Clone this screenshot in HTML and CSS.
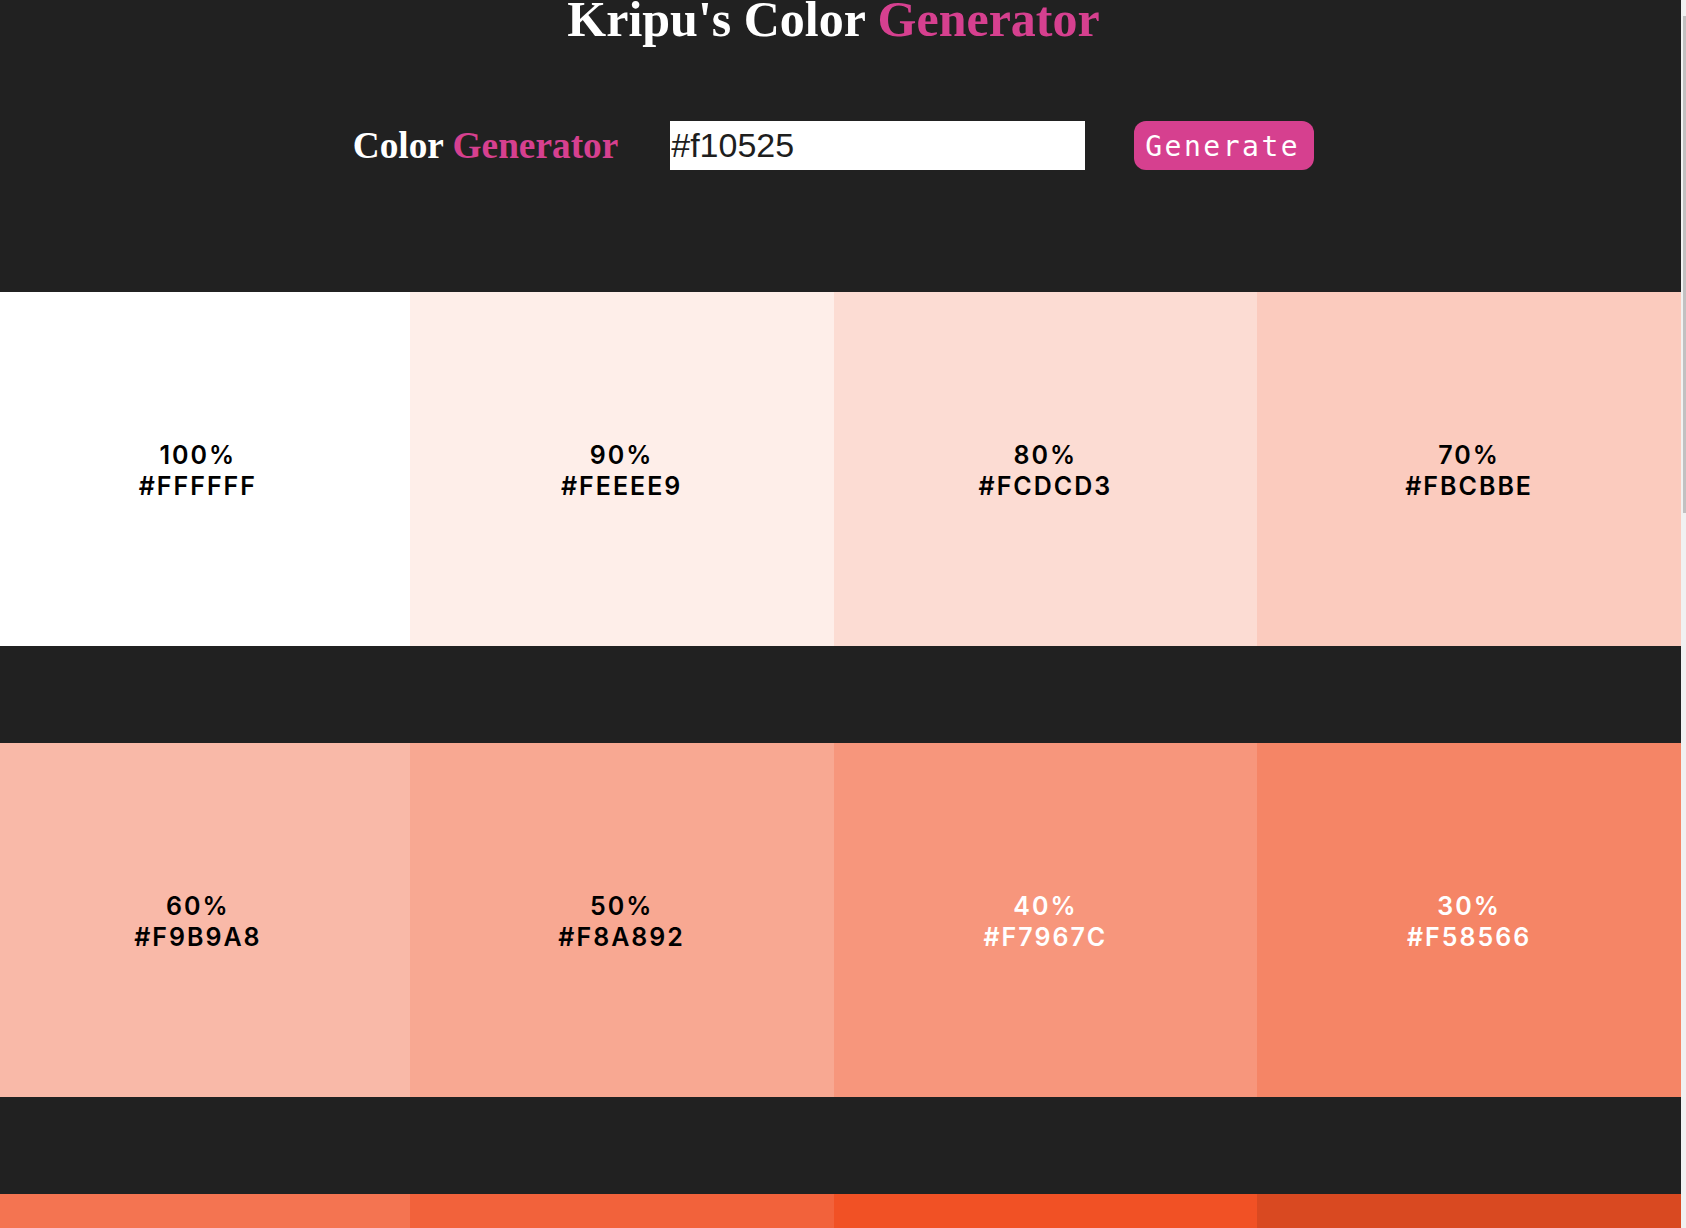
FILE: index.html
```html
<!DOCTYPE html>
<html lang="en">
<head>
<meta charset="utf-8">
<title>Kripu's Color Generator</title>
<link rel="stylesheet" href="styles.css">
</head>
<body>
<div class="page">
  <main class="viewport">
    <div class="content">
      <h1 class="title">Kripu's Color <span class="accent">Generator</span></h1>
      <form class="generator">
        <h2 class="subtitle">Color <span class="accent">Generator</span></h2>
        <input class="color-input" type="text" value="#f10525">
        <button class="btn" type="button">Generate</button>
      </form>
      <section class="swatches">
        <div class="swatch" style="background:#FFFFFF"><p>100%</p><p>#FFFFFF</p></div>
        <div class="swatch" style="background:#FEEEE9"><p>90%</p><p>#FEEEE9</p></div>
        <div class="swatch" style="background:#FCDCD3"><p>80%</p><p>#FCDCD3</p></div>
        <div class="swatch" style="background:#FBCBBE"><p>70%</p><p>#FBCBBE</p></div>
        <div class="swatch" style="background:#F9B9A8"><p>60%</p><p>#F9B9A8</p></div>
        <div class="swatch" style="background:#F8A892"><p>50%</p><p>#F8A892</p></div>
        <div class="swatch dark" style="background:#F7967C"><p>40%</p><p>#F7967C</p></div>
        <div class="swatch dark" style="background:#F58566"><p>30%</p><p>#F58566</p></div>
        <div class="swatch dark" style="background:#F47451"><p>20%</p><p>#F47451</p></div>
        <div class="swatch dark" style="background:#F2623B"><p>10%</p><p>#F2623B</p></div>
        <div class="swatch dark" style="background:#F15125"><p>0%</p><p>#F15125</p></div>
        <div class="swatch dark" style="background:#D94921"><p>10%</p><p>#D94921</p></div>
      </section>
    </div>
  </main>
  <div class="scrollbar"><div class="thumb"></div></div>
</div>
</body>
</html>
```
FILE: styles.css
```css
html, body {
  margin: 0;
  padding: 0;
  height: 100%;
  overflow: hidden;
  background: #212121;
}

.page {
  display: flex;
  height: 1228px;
}

.viewport {
  flex: 1;
  overflow: hidden;
  background: #212121;
}

.content {
  width: 1695px;
  margin-left: -14px;
}

.accent {
  color: #d6408f;
}

.title {
  margin: 0;
  text-align: center;
  color: #ffffff;
  font-family: "Liberation Serif", serif;
  font-weight: bold;
  font-size: 50px;
  line-height: 38px;
}

.generator {
  display: flex;
  justify-content: center;
  align-items: center;
  margin-top: 83px;
  height: 49px;
}

.subtitle {
  margin: 0 52px 0 0;
  color: #ffffff;
  font-family: "Liberation Serif", serif;
  font-weight: bold;
  font-size: 37.3px;
}

.color-input {
  box-sizing: border-box;
  width: 415px;
  height: 49px;
  margin: 0 49px 0 0;
  padding: 0 0 0 1px;
  border: none;
  outline: none;
  background: #ffffff;
  color: #1e1e1e;
  font-family: "Liberation Sans", Arial, sans-serif;
  font-size: 34px;
}

.btn {
  box-sizing: border-box;
  width: 180px;
  height: 49px;
  padding: 1px 0 0 11px;
  border: none;
  border-radius: 12px;
  background: #d6408f;
  color: #ffffff;
  font-family: "DejaVu Sans Mono", monospace;
  font-size: 28px;
  letter-spacing: 2.5px;
  text-align: left;
}

.swatches {
  display: grid;
  grid-template-columns: repeat(4, 1fr);
  grid-auto-rows: 354px;
  row-gap: 97px;
  margin-top: 122px;
}

.swatch {
  box-sizing: border-box;
  padding-top: 4px;
  display: flex;
  flex-direction: column;
  justify-content: center;
  align-items: center;
  color: #000000;
  font-family: "Inter", "DejaVu Sans", sans-serif;
  font-weight: 600;
  font-size: 25px;
  letter-spacing: 2px;
  line-height: 31px;
}

.swatch p {
  margin: 0;
}

.swatch.dark {
  color: #ffffff;
}

.scrollbar {
  width: 5px;
  background: #f1f1f1;
  padding-top: 16px;
  box-sizing: border-box;
  display: flex;
  justify-content: flex-end;
  align-items: flex-start;
}

.thumb {
  width: 3px;
  height: 497px;
  background: #c1c1c1;
}
```
